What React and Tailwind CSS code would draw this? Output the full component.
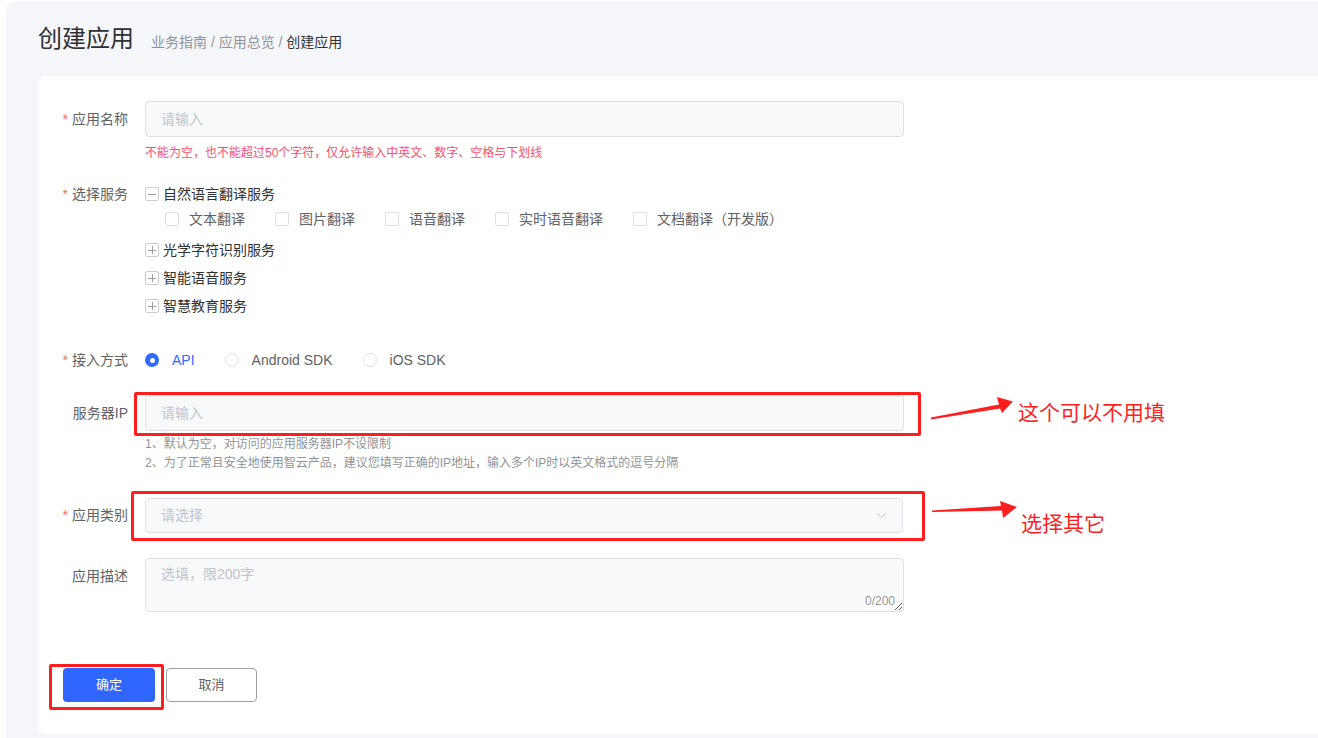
import { ChevronDown } from "lucide-react";

const font = { fontFamily: '"Liberation Sans", "Noto Sans CJK SC", sans-serif' };

const Label = ({ required, children }) => (
  <div className="w-[90px] mr-[17px] shrink-0 text-right text-[14px] text-[#606266]">
    {required && <span className="text-[#f56c6c] mr-[4px]">*</span>}
    {children}
  </div>
);

const TreeBox = ({ type }) => (
  <span className="relative w-[14px] h-[14px] shrink-0 border border-[#c8cbd2] rounded-[2px] bg-white flex items-center justify-center">
    <span className="w-[8px] h-[1px] bg-[#9a9da5]" />
    {type === "plus" && <span className="absolute w-[1px] h-[8px] bg-[#9a9da5]" />}
  </span>
);

const CheckItem = ({ label }) => (
  <div className="flex items-center mr-[30px]">
    <span className="w-[14px] h-[14px] border border-[#dcdfe6] rounded-[2px] bg-white mr-[10px]" />
    <span className="text-[14px] text-[#606266]">{label}</span>
  </div>
);

const Radio = ({ label, checked }) => (
  <div className="flex items-center mr-[30px]">
    {checked ? (
      <span className="w-[14px] h-[14px] rounded-full bg-[#2f6bff] flex items-center justify-center mr-[13px]">
        <span className="w-[5px] h-[5px] rounded-full bg-white" />
      </span>
    ) : (
      <span className="w-[14px] h-[14px] rounded-full border border-[#dcdfe6] bg-white mr-[13px]" />
    )}
    <span className={`text-[14px] ${checked ? "text-[#2f6bff]" : "text-[#606266]"}`}>{label}</span>
  </div>
);

const subServices = ["文本翻译", "图片翻译", "语音翻译", "实时语音翻译", "文档翻译（开发版）"];
const otherServices = ["光学字符识别服务", "智能语音服务", "智慧教育服务"];

export default function App() {
  return (
    <div style={font} className="relative w-[1318px] h-[738px] overflow-hidden bg-white pl-[6px] pt-[1px]">
      <div className="h-full bg-[#f5f6fa] rounded-tl-[10px] pl-[32px] pt-[22px]">
        {/* header */}
        <div className="flex items-baseline h-[32px]">
          <h1 className="text-[24px] leading-[32px] text-[#303133] font-normal">创建应用</h1>
          <div className="ml-[17px] text-[14px] text-[#909399]">
            业务指南 / 应用总览 / <span className="text-[#303133]">创建应用</span>
          </div>
        </div>

        {/* card */}
        <div className="mt-[21px] w-[1320px] bg-white rounded-[8px] pt-[25px] pb-[32px]">
          {/* 应用名称 */}
          <div className="flex items-center">
            <Label required>应用名称</Label>
            <div className="w-[759px] h-[36px] bg-[#f8f9fb] border border-[#dcdfe6] rounded-[4px] pl-[15px] flex items-center text-[14px] text-[#c0c4cc]">
              请输入
            </div>
          </div>
          <div className="ml-[107px] mt-[6px] text-[12px] leading-[20px] text-[#f4516c]">
            不能为空，也不能超过50个字符，仅允许输入中英文、数字、空格与下划线
          </div>

          {/* 选择服务 */}
          <div className="flex mt-[21px]">
            <div className="leading-[20px]">
              <Label required>选择服务</Label>
            </div>
            <div className="flex flex-col">
              <div className="flex items-center h-[20px]">
                <TreeBox type="minus" />
                <span className="ml-[4px] text-[14px] text-[#303133]">自然语言翻译服务</span>
              </div>
              <div className="flex items-center h-[20px] mt-[5px] ml-[20px]">
                {subServices.map((s) => (
                  <CheckItem key={s} label={s} />
                ))}
              </div>
              {otherServices.map((s, i) => (
                <div key={s} className={`flex items-center h-[20px] ${i === 0 ? "mt-[11px]" : "mt-[8px]"}`}>
                  <TreeBox type="plus" />
                  <span className="ml-[4px] text-[14px] text-[#303133]">{s}</span>
                </div>
              ))}
            </div>
          </div>

          {/* 接入方式 */}
          <div className="flex items-center h-[20px] mt-[34px]">
            <Label required>接入方式</Label>
            <Radio label="API" checked />
            <Radio label="Android SDK" />
            <Radio label="iOS SDK" />
          </div>

          {/* 服务器IP */}
          <div className="flex items-center mt-[25px]">
            <Label>服务器IP</Label>
            <div className="relative">
              <div className="w-[759px] h-[36px] bg-[#f8f9fb] border border-[#dcdfe6] rounded-[4px] pl-[15px] flex items-center text-[14px] text-[#c0c4cc]">
                请输入
              </div>
              <div className="absolute -left-[11px] -right-[17px] -top-[3px] -bottom-[5px] border-[3px] border-[#ff1e1e] rounded-[2px]" />
            </div>
          </div>
          <div className="ml-[107px] mt-[4px] text-[12px] leading-[19px] text-[#909399]">
            <div>1、默认为空，对访问的应用服务器IP不设限制</div>
            <div>2、为了正常且安全地使用智云产品，建议您填写正确的IP地址，输入多个IP时以英文格式的逗号分隔</div>
          </div>

          {/* 应用类别 */}
          <div className="flex items-center mt-[25px]">
            <Label required>应用类别</Label>
            <div className="relative">
              <div className="w-[758px] h-[35px] bg-[#f8f9fb] border border-[#dcdfe6] rounded-[4px] pl-[15px] pr-[12px] flex items-center justify-between text-[14px] text-[#c0c4cc]">
                请选择
                <ChevronDown size={17} strokeWidth={1.25} className="text-[#b8bcc4]" />
              </div>
              <div className="absolute -left-[14px] -right-[22px] -top-[7px] -bottom-[8px] border-[3px] border-[#ff1e1e] rounded-[2px]" />
            </div>
          </div>

          {/* 应用描述 */}
          <div className="flex mt-[25px]">
            <div className="pt-[8px] leading-[20px]">
              <Label>应用描述</Label>
            </div>
            <div className="relative">
              <textarea
                placeholder="选填，限200字"
                className="block w-[759px] h-[54px] bg-[#f8f9fb] border border-[#dcdfe6] rounded-[4px] px-[15px] py-[5px] text-[14px] leading-[20px] text-[#303133] placeholder:text-[#c0c4cc] outline-none resize-y"
              />
              <span className="absolute right-[8px] bottom-[3px] bg-white px-[1px] text-[12px] leading-[16px] text-[#909399]">
                0/200
              </span>
            </div>
          </div>

          {/* buttons */}
          <div className="flex items-center mt-[56px] ml-[25px]">
            <div className="relative">
              <button className="w-[92px] h-[34px] rounded-[4px] bg-[#2f66ff] text-white text-[13px]">确定</button>
              <div className="absolute -left-[14px] -right-[9px] -top-[4px] -bottom-[8px] border-[3px] border-[#ff1e1e] rounded-[2px]" />
            </div>
            <button className="ml-[11px] w-[91px] h-[34px] rounded-[4px] border border-[#9c9ea5] bg-white text-[#606266] text-[13px]">
              取消
            </button>
          </div>
        </div>
      </div>

      {/* annotations */}
      <svg className="absolute left-[920px] top-[390px]" width="110" height="135" viewBox="0 0 110 135">
        <polygon points="11,27.5 79,14.5 77,7 93,11.5 82,23 80,18.5 11,29.5" fill="#ff1e1e" />
        <polygon points="12,120.5 81,116 80,111 97,117 83,128 82,120.5 12,122" fill="#ff1e1e" />
      </svg>
      <div className="absolute left-[1018px] top-[401px] text-[21px] leading-[24px] text-[#ff1e1e]">这个可以不用填</div>
      <div className="absolute left-[1021px] top-[512px] text-[21px] leading-[24px] text-[#ff1e1e]">选择其它</div>
    </div>
  );
}
